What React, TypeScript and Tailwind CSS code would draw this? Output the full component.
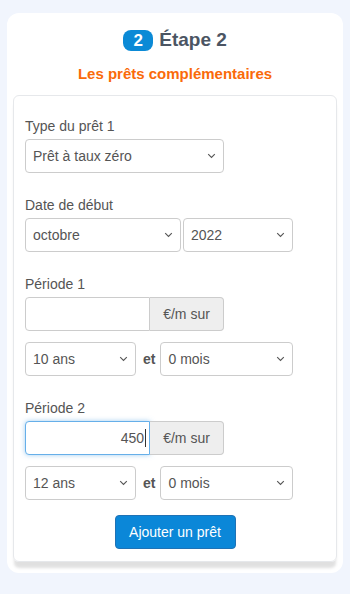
import { ReactNode } from 'react';

const Chevron = () => (
  <svg
    className="pointer-events-none absolute right-[8px] top-1/2 -translate-y-1/2"
    width="9"
    height="6"
    viewBox="0 0 9 6"
    fill="none"
  >
    <path d="M1.2 1.2l3.3 3.3 3.3-3.3" stroke="#555" strokeWidth="1.1" />
  </svg>
);

const Select = ({ value, className }: { value: string; className: string }) => (
  <div className={`relative ${className}`}>
    <select
      defaultValue={value}
      className="h-[34px] w-full appearance-none rounded-[4px] border border-[#ccc] bg-white pl-[7px] pr-[20px] text-[14px] text-[#555] outline-none"
    >
      <option>{value}</option>
    </select>
    <Chevron />
  </div>
);

const Field = ({ label, children }: { label: string; children: ReactNode }) => (
  <div className="mb-[22px]">
    <div className="mb-[3px] text-[14px] leading-[20px] text-[#555]">{label}</div>
    {children}
  </div>
);

const Amount = ({ value, focused }: { value?: string; focused?: boolean }) => (
  <div className="flex w-[199px]">
    <div
      className={
        focused
          ? 'flex h-[34px] w-[125px] items-center justify-end rounded-l-[4px] border border-[#66afe9] bg-white pr-[3px] text-[14px] text-[#555] shadow-[0_0_5px_rgba(102,175,233,0.6)]'
          : 'flex h-[34px] w-[125px] items-center justify-end rounded-l-[4px] border border-[#ccc] bg-white pr-[3px] text-[14px] text-[#555]'
      }
    >
      {value}
      {focused && <span className="ml-px h-[18px] w-px bg-[#333]" />}
    </div>
    <div className="flex h-[34px] flex-1 items-center justify-center rounded-r-[4px] border border-l-0 border-[#ccc] bg-[#eee] text-[14px] text-[#555]">
      €/m sur
    </div>
  </div>
);

const Duration = ({ years }: { years: string }) => (
  <div className="mt-[11px] flex w-[268px] items-center">
    <Select value={years} className="w-[111px]" />
    <span className="ml-[7px] mr-[5px] text-[14px] font-bold text-[#555]">et</span>
    <Select value="0 mois" className="flex-1" />
  </div>
);

export default function App() {
  return (
    <div
      className="min-h-[594px] bg-[#f1f5fd] px-[7px] pt-[13px]"
      style={{ fontFamily: '"Liberation Sans", Arial, sans-serif' }}
    >
      <div className="rounded-[12px] bg-white px-[6px] pb-[11px] pt-[15px]">
        <div className="flex items-center justify-center gap-[6px]">
          <span className="flex h-[21px] w-[30px] items-center justify-center rounded-[8px] bg-[#0b8ad6] text-[17px] font-bold leading-none text-white">
            2
          </span>
          <span className="text-[19px] font-bold leading-[24px] text-[#4b5563]">Étape 2</span>
        </div>
        <div className="mt-[12px] mb-[11px] text-center text-[15px] font-bold leading-[20px] text-[#fa6a0a]">
          Les prêts complémentaires
        </div>

        <div className="rounded-[6px] border border-[#e6e8eb] px-[11px] pb-[12px] pt-[20px] shadow-[0_7px_3px_-1px_rgba(0,0,0,0.12)]">
          <Field label="Type du prêt 1">
            <Select value="Prêt à taux zéro" className="w-[199px]" />
          </Field>

          <Field label="Date de début">
            <div className="flex gap-[2px]">
              <Select value="octobre" className="w-[156px]" />
              <Select value="2022" className="w-[110px]" />
            </div>
          </Field>

          <Field label="Période 1">
            <Amount />
            <Duration years="10 ans" />
          </Field>

          <div className="mb-[15px]">
            <div className="mb-[3px] text-[14px] leading-[20px] text-[#555]">Période 2</div>
            <Amount value="450" focused />
            <Duration years="12 ans" />
          </div>

          <div className="flex justify-center">
            <button className="h-[34px] w-[121px] rounded-[4px] border border-[#1f72b5] bg-[#0b87d8] text-[14px] text-white">
              Ajouter un prêt
            </button>
          </div>
        </div>
      </div>
    </div>
  );
}
